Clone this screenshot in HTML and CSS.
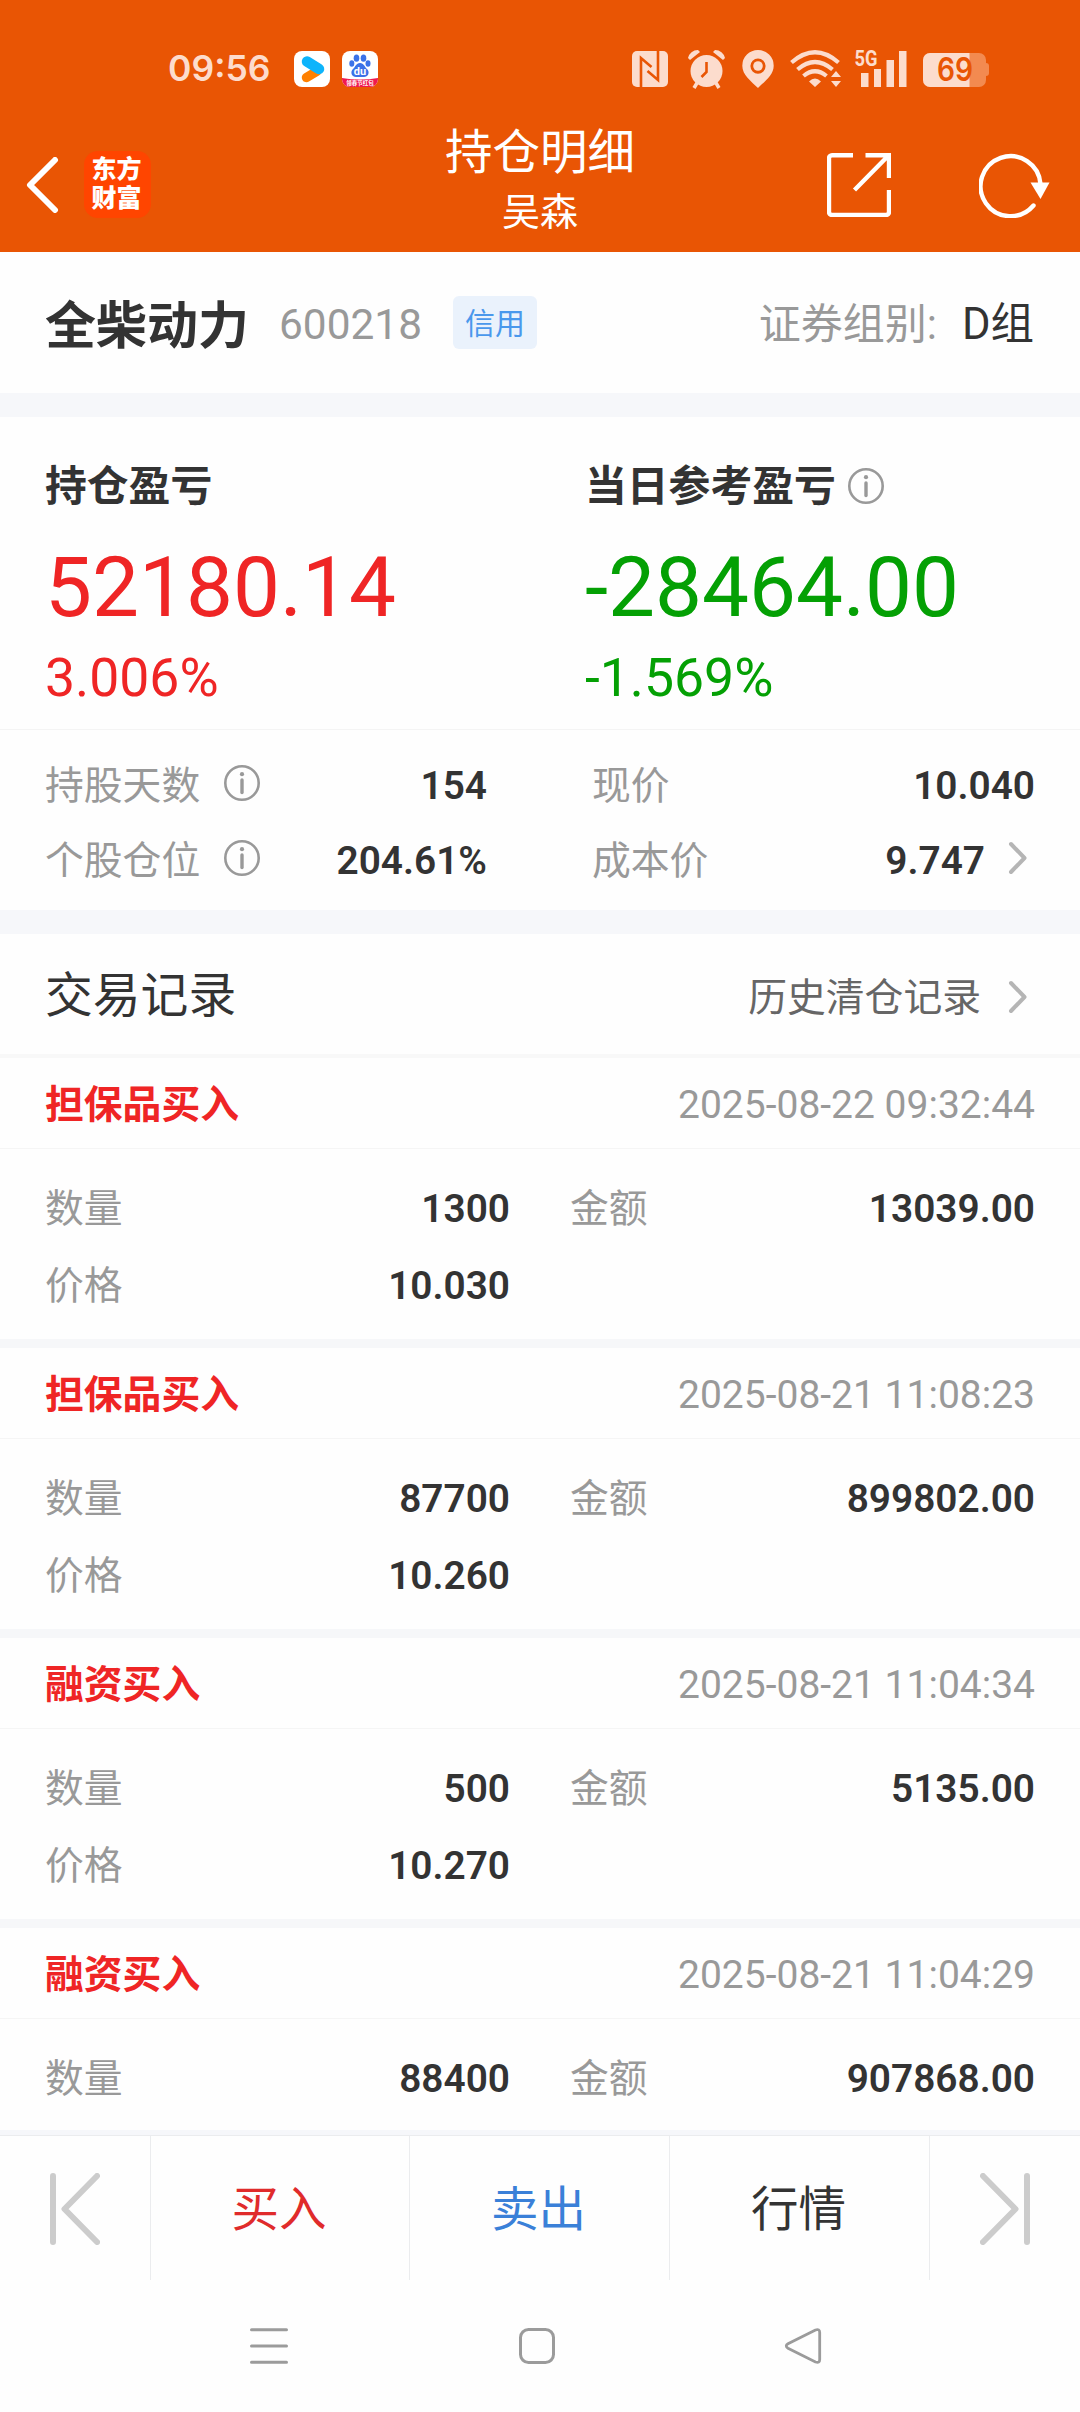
FILE: index.html
```html
<!DOCTYPE html>
<html lang="zh-CN">
<head>
<meta charset="utf-8">
<title>持仓明细</title>
<link rel="stylesheet" href="styles.css">
</head>
<body>
<svg class="defs" width="0" height="0">
  <symbol id="info" viewBox="0 0 36 36"><circle cx="18" cy="18" r="16.700" fill="none" stroke="#999" stroke-width="2.600"/><circle cx="18" cy="9.200" r="2.100" fill="#999"/><path d="M18 15v12.500" stroke="#999" stroke-width="3.400" stroke-linecap="round"/></symbol>
  <symbol id="chev" viewBox="0 0 20 34"><path d="M3 3l13.500 14L3 31" fill="none" stroke="#b5b5b5" stroke-width="4" stroke-linecap="round" stroke-linejoin="round"/></symbol>
</svg>
<header class="header">
  <div class="status">
    <span class="time">09:56</span>
    <svg class="app" viewBox="0 0 36 36"><rect width="36" height="36" rx="8" fill="#fff"/><path d="M12.500 26.500l10-6" stroke="#ff8000" stroke-width="9.500" stroke-linecap="round"/><path d="M13 10.500l12 7.500" stroke="#0db4fb" stroke-width="10.500" stroke-linecap="round"/></svg>
    <svg class="app baidu" viewBox="0 0 36 36"><defs><clipPath id="r"><rect width="36" height="36" rx="8"/></clipPath></defs><g clip-path="url(#r)"><rect width="36" height="36" fill="#fff"/><path d="M0 27q18 3 36 0v9H0z" fill="#f0194f"/><g fill="#3b72e8"><ellipse cx="14.500" cy="7.200" rx="2.800" ry="3.600"/><ellipse cx="21.500" cy="7.200" rx="2.800" ry="3.600"/><ellipse cx="9.800" cy="12.500" rx="2.500" ry="3.200"/><ellipse cx="26" cy="12.500" rx="2.500" ry="3.200"/><path d="M18 12c4 0 4.500 4 7.500 6.500 2.500 3 .5 7.500-3.500 7.500h-8c-4 0-6-4.500-3.500-7.500C13.500 16 14 12 18 12z"/></g><text x="18" y="24" text-anchor="middle" class="du">du</text><text x="18" y="34" text-anchor="middle" class="promo">领春节红包</text></g></svg>
    <svg class="sys" viewBox="0 0 360 40">
      <g fill="#fcdccd">
        <rect x="2" y="2" width="36" height="36" rx="5"/>
        <path d="M11 38V9l10.500 9M28 2v29l-10.500-9" fill="none" stroke="#e95504" stroke-width="2.600"/>
        <circle cx="76.500" cy="22" r="16"/>
        <path d="M58 9a10 10 0 0 1 10-8l2 2-10 8zM95 9a10 10 0 0 0-10-8l-2 2 10 8z"/>
        <path d="M67 34l-3 5M86 34l3 5" stroke="#fcdccd" stroke-width="3.500"/>
        <path d="M76.500 13v10l-5 5" fill="none" stroke="#e95504" stroke-width="2.600"/>
        <path fill-rule="evenodd" d="M128 1a15.700 15.700 0 0 0-15.700 15.700C112.300 26 121 32 128 39c7-7 15.700-13 15.700-22.300A15.700 15.700 0 0 0 128 1zm0 8.500a7.600 7.600 0 1 1 0 15.200 7.600 7.600 0 0 1 0-15.200z"/><circle cx="128" cy="17" r="4.800"/>
      </g>
      <g fill="none" stroke="#fcdccd" stroke-width="4.200"><path d="M161.500 13.500q23.500-20.500 47 0"/><path d="M167.500 20.500q17.500-15 35 0"/><path d="M173.500 27q11.500-9.500 23 0"/></g>
      <path d="M179 32.500q6-6 12 0l-6 5.500zM201 28l5-6 5 6zM201 32h10l-5 6z" fill="#fcdccd"/>
      <text x="224.500" y="17" textLength="23" lengthAdjust="spacingAndGlyphs" class="net">5G</text>
      <path d="M231 24h7.500v14H231zM244 20h7v18h-7zM256.500 11h7.500v27h-7.500zM269 2h7.500v36H269z" fill="#fcdccd"/>
      <rect x="293" y="4" width="63" height="34" rx="7" fill="#f38a50"/><path d="M356 14q3 0 3 3v7q0 3-3 3z" fill="#f38a50"/>
      <path d="M300 4h39.500v34H300a7 7 0 0 1-7-7V11a7 7 0 0 1 7-7z" fill="#fcdccd"/>
      <text x="325" y="32" text-anchor="middle" textLength="36" lengthAdjust="spacingAndGlyphs" class="batt">69</text>
    </svg>
  </div>
  <div class="titlebar">
    <svg class="back" viewBox="0 0 34 56"><path d="M29 3L4 28l25 25" fill="none" stroke="#fff" stroke-width="6" stroke-linecap="round" stroke-linejoin="round"/></svg>
    <div class="logo"><span>东方</span><span>财富</span></div>
    <div class="title"><h1>持仓明细</h1><p>吴森</p></div>
    <svg class="share" viewBox="0 0 64 64"><path d="M26 2.200H5a3 3 0 0 0-3 3V59a3 3 0 0 0 3 3h54a3 3 0 0 0 3-3V37M38.500 2.200H62V25M61 3L27.500 37" fill="none" stroke="#fff" stroke-width="4.400"/></svg>
    <svg class="refresh" viewBox="0 0 72 66"><path d="M54.500 53.500A30 30 0 1 1 61.500 32" fill="none" stroke="#fff" stroke-width="4.400" stroke-linecap="round"/><path d="M51.500 30.500h19L61.500 47z" fill="#fff"/></svg>
  </div>
</header>
<main>
  <section class="stock"><h2>全柴动力</h2><span class="code">600218</span><span class="tag">信用</span><span class="group">证券组别:</span><span class="gval">D组</span></section>
  <section class="profit">
    <div class="pcol up"><h3>持仓盈亏</h3><p class="big">52180.14</p><p class="pct">3.006%</p></div>
    <div class="pcol down"><h3>当日参考盈亏<svg class="info"><use href="#info"/></svg></h3><p class="big">-28464.00</p><p class="pct">-1.569%</p></div>
  </section>
  <section class="facts">
    <div class="fact"><span>持股天数</span><svg class="info"><use href="#info"/></svg><b>154</b></div>
    <div class="fact right"><span>现价</span><b>10.040</b></div>
    <div class="fact"><span>个股仓位</span><svg class="info"><use href="#info"/></svg><b>204.61%</b></div>
    <div class="fact right"><span>成本价</span><b>9.747</b><svg class="chev"><use href="#chev"/></svg></div>
  </section>
  <section class="history"><h4>交易记录</h4><span>历史清仓记录</span><svg class="chev"><use href="#chev"/></svg></section>
  <article class="record"><div class="rhead"><b>担保品买入</b><time>2025-08-22 09:32:44</time></div>
    <dl><dt>数量</dt><dd>1300</dd><dt class="amt">金额</dt><dd>13039.00</dd><dt>价格</dt><dd>10.030</dd></dl></article>
  <article class="record"><div class="rhead"><b>担保品买入</b><time>2025-08-21 11:08:23</time></div>
    <dl><dt>数量</dt><dd>87700</dd><dt class="amt">金额</dt><dd>899802.00</dd><dt>价格</dt><dd>10.260</dd></dl></article>
  <article class="record"><div class="rhead"><b>融资买入</b><time>2025-08-21 11:04:34</time></div>
    <dl><dt>数量</dt><dd>500</dd><dt class="amt">金额</dt><dd>5135.00</dd><dt>价格</dt><dd>10.270</dd></dl></article>
  <article class="record last"><div class="rhead"><b>融资买入</b><time>2025-08-21 11:04:29</time></div>
    <dl><dt>数量</dt><dd>88400</dd><dt class="amt">金额</dt><dd>907868.00</dd></dl></article>
</main>
<footer class="actions">
  <div><svg class="step" viewBox="0 0 50 72"><path d="M3 3v66M47 3L14.500 36 47 69" fill="none" stroke="#ccc" stroke-width="6" stroke-linecap="round" stroke-linejoin="round"/></svg></div>
  <div class="buy">买入</div><div class="sell">卖出</div><div class="quote">行情</div>
  <div><svg class="step" viewBox="0 0 50 72"><path d="M47 3v66M3 3l32.500 33L3 69" fill="none" stroke="#ccc" stroke-width="6" stroke-linecap="round" stroke-linejoin="round"/></svg></div>
</footer>
<nav class="nav">
  <svg viewBox="0 0 38 38"><path d="M1.500 2.800h35M1.500 19h35M1.500 35.200h35" stroke="#9b9b9b" stroke-width="3" stroke-linecap="round"/></svg>
  <svg viewBox="0 0 38 38"><rect x="2.500" y="2.500" width="33" height="33" rx="8" fill="none" stroke="#9b9b9b" stroke-width="3"/></svg>
  <svg viewBox="0 0 38 38"><path d="M31.500 3L4 16.800q-3.500 2.200 0 4.400L31.500 35q4.200 1.500 4.200-2.500v-27q0-4-4.200-2.500z" fill="none" stroke="#9b9b9b" stroke-width="2.800"/></svg>
</nav>
</body>
</html>
```
FILE: styles.css
```css
* { box-sizing: border-box; margin: 0; padding: 0; }
body { width: 1080px; height: 2412px; overflow: hidden; display: flex; flex-direction: column; background: #fefefe; color: #333; font-family: Roboto, "Noto Sans CJK SC", sans-serif; font-size: 38.8px; line-height: 1; }
svg { display: block; flex: none; }
.defs { position: absolute; }
h1, h2, h3, h4 { font-size: inherit; font-weight: 400; }

.header { height: 252px; background: #e95504; color: #fff; flex: none; }
.status { height: 102px; padding: 36px 90px 0 168px; display: flex; align-items: center; }
.time { font: 600 35.500px/1 Inter, sans-serif; color: #fddccc; width: 126px; }
.app { width: 36px; height: 36px; margin-right: 12px; }
.sys { width: 360px; height: 40px; margin-left: auto; overflow: visible; }
.du { font: 700 11px Roboto, sans-serif; fill: #fff; }
.promo { font: 700 5.500px "Noto Sans CJK SC", sans-serif; fill: #fff; }
.net { font: 700 22px Roboto, sans-serif; fill: #fcdccd; }
.batt { font: 600 32px Inter, sans-serif; fill: #e95504; }
.titlebar { height: 150px; padding: 15px 29px 0 26px; display: flex; align-items: center; }
.back { width: 34px; height: 56px; }
.logo { width: 67px; height: 67px; margin-left: 24px; border-radius: 14px; background: #ff4500; font-size: 25px; font-weight: 800; line-height: 29px; display: flex; flex-direction: column; align-items: center; justify-content: center; padding: 0 2px 1px 0; }
.title { text-align: center; margin-left: 293px; width: 192px; padding-bottom: 8px; }
.title h1 { font-size: 47.500px; line-height: 62px; }
.title p { font-size: 38px; line-height: 56px; }
.share { width: 64px; height: 64px; margin-left: 191px; }
.refresh { width: 72px; height: 66px; margin-left: 88px; }

.stock { height: 141px; padding: 5px 46px 0 45px; display: flex; align-items: center; }
.stock h2 { font-size: 51px; font-weight: 700; padding-top: 3px; }
.code { font-size: 42.400px; color: #999; margin-left: 30px; }
.tag { width: 84px; height: 53px; margin: -5px 0 0 31px; border-radius: 6px; background: #eaf2fc; color: #4a98ec; font-size: 30px; line-height: 55px; text-align: center; }
.group { margin-left: auto; font-size: 42px; color: #999; }
.gval { margin-left: 25px; font-size: 43.500px; }
.profit { border-top: 24px solid #f6f7fa; border-bottom: 1px solid #f4f4f4; height: 337px; display: grid; grid-template-columns: 1fr 1fr; padding-left: 45px; }
.pcol { width: 540px; }
.pcol h3 { font-size: 41.800px; font-weight: 700; line-height: 60px; margin-top: 40px; display: flex; align-items: center; gap: 12px; }
.pcol h3 .info { margin-top: -2px; }
.info { width: 36px; height: 36px; }
.big { font-size: 83.600px; line-height: 100px; margin-top: 20px; }
.pct { font-size: 53.500px; line-height: 64px; margin-top: 9px; }
.up p { color: #ef2525; }
.down p { color: #04a004; }
.facts { height: 180px; padding: 19px 45px 11px; display: grid; grid-template-columns: 442px 443px; column-gap: 105px; grid-auto-rows: 75px; }
.fact { display: flex; align-items: center; color: #999; }
.fact b { margin-left: auto; color: #333; font-weight: 600; }
.fact .info { margin: -8px 0 0 24px; }
.chev { width: 20px; height: 34px; margin: 0 7px 0 23px; }
.fact .chev { margin-top: -8px; }
.history { border-top: 24px solid #f6f7fa; border-bottom: 4px solid #f8f8f8; height: 148px; padding: 5px 45px 0; display: flex; align-items: center; }
.history h4 { font-size: 47.800px; flex: 1; }
.history span { color: #666; padding-top: 4px; }
.history .chev { margin-left: 27px; }
.record { height: 290px; border-bottom: 9px solid #f6f7f9; }
.rhead { height: 91px; padding: 4px 45px 0; border-bottom: 1px solid #f5f5f5; display: flex; justify-content: space-between; align-items: center; }
.rhead b { color: #ef2525; }
.rhead time { color: #999; font-size: 39px; }
.record dl { padding: 22px 45px 0; display: grid; grid-template-columns: 100px 365px 160px 365px; grid-auto-rows: 77px; align-items: center; }
.record dt { color: #999; }
.record dt.amt { padding-left: 60px; }
.record dd { text-align: right; font-weight: 600; }
.record.last { height: 202px; border-bottom: 0; }

.actions { flex: none; height: 150px; border-top: 5px solid #f6f7fa; display: grid; grid-template-columns: 151px 259px 260px 260px 150px; font-size: 47.500px; }
.actions div { border-top: 1px solid #ebecee; border-right: 1px solid #ebecee; padding-top: 1px; display: flex; align-items: center; justify-content: center; }
.actions div:last-child { border-right: 0; }
.actions .buy, .actions .sell, .actions .quote { padding: 5px 2px 0 0; }
.buy { color: #e02b2b; }
.sell { color: #3a80d8; }
.step { width: 50px; height: 72px; }
.nav { flex: 1; display: flex; padding: 0 258px 0 250px; justify-content: space-between; align-items: center; }
.nav svg { width: 38px; height: 38px; }
.nav svg:nth-child(2) { margin-left: 2px; }
```
